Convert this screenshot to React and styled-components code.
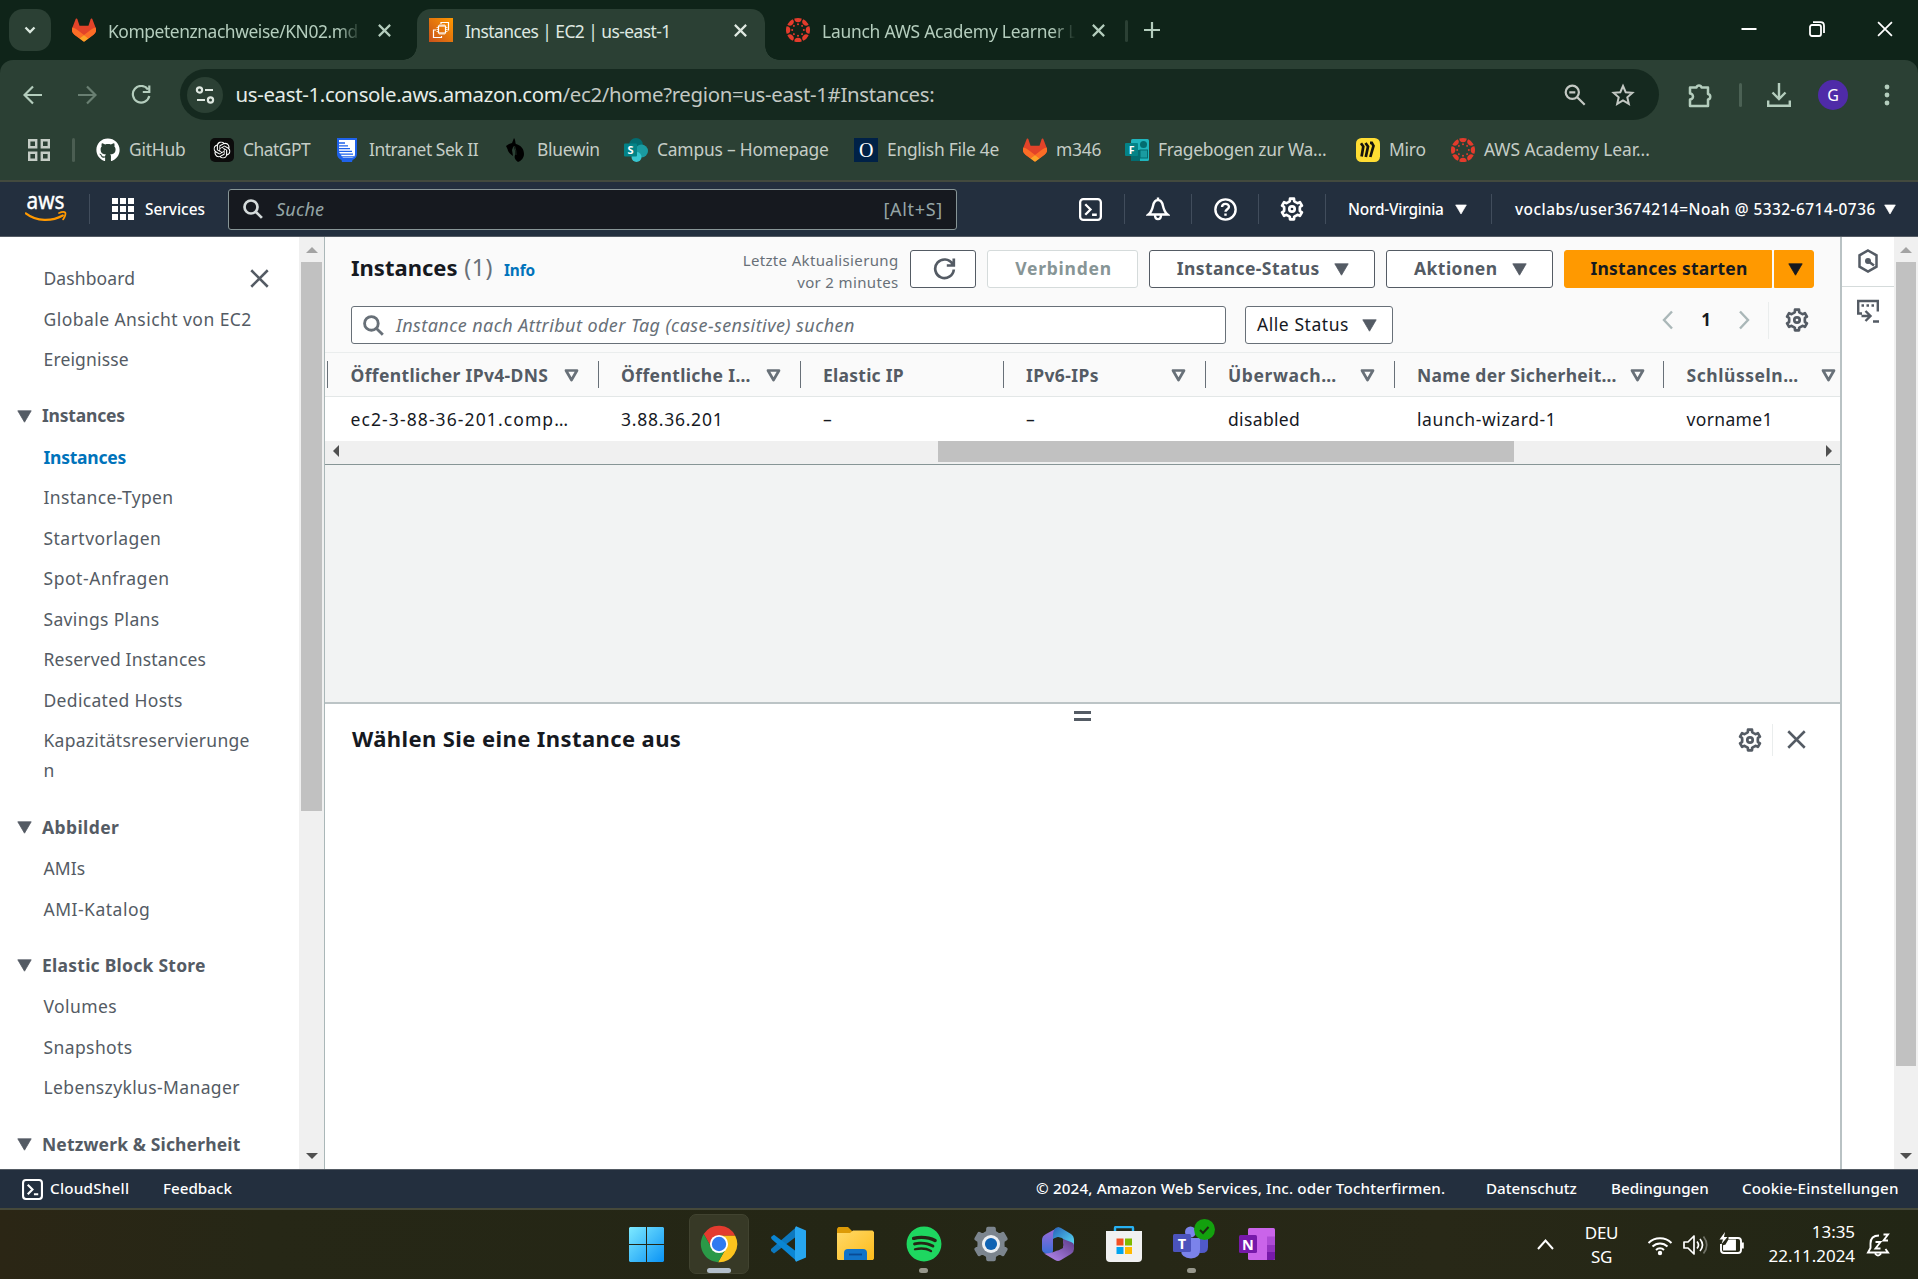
import React from "react";
import styled, { createGlobalStyle } from "styled-components";
import { FaGithub, FaSpotify } from "react-icons/fa";
import { SiOpenai } from "react-icons/si";

const c = {
  strip: "#0f2419",
  toolbar: "#2b4034",
  omni: "#15291f",
  mint: "#b4cdbd",
  chromeText: "#c5cdc6",
  navy: "#232f3e",
  grey: "#545b64",
  mid: "#687078",
  blue: "#0073bb",
  ink: "#16191f",
};

const Global = createGlobalStyle`
  *, *::before, *::after { box-sizing: border-box; }
  body { margin: 0; background: #fff; overflow: hidden; }
  svg { display: block; flex: none; }
  button { font: inherit; color: inherit; cursor: pointer; margin: 0; }
`;

const Screen = styled.div`
  width: 1918px;
  height: 1279px;
  overflow: hidden;
  display: flex;
  flex-direction: column;
  font-family: "Noto Sans", "Open Sans", sans-serif;
  font-size: 17.5px;
  color: ${c.ink};
`;

/* fixed-width slot inside a bar */
const Slot = styled.div`
  flex: none;
  width: ${(p) => p.$w}px;
  height: 100%;
  display: flex;
  align-items: center;
  justify-content: ${(p) => p.$align || "center"};
  white-space: nowrap;
`;

const VRule = styled.span`
  flex: none;
  width: ${(p) => p.$w || 1}px;
  height: ${(p) => p.$h || 30}px;
  margin: 0 ${(p) => p.$r || 0}px 0 ${(p) => p.$l || 0}px;
  background: ${(p) => p.$c || "#414d5c"};
  border-radius: ${(p) => (p.$round ? 2 : 0)}px;
`;

/* ---------- browser chrome ---------- */
const TabStrip = styled.header`
  height: 60px;
  flex: none;
  display: flex;
  background: ${c.strip};
  color: ${c.mint};
  font-size: 17.4px;
`;
const TabSearch = styled.button`
  width: 42px;
  height: 42px;
  margin: 9px 9px 0 9px;
  padding: 0;
  border: 0;
  border-radius: 14px;
  background: ${c.toolbar};
  color: #dbe8df;
  display: grid;
  place-items: center;
`;
const Tab = styled.div`
  position: relative;
  flex: none;
  width: ${(p) => p.$w}px;
  height: 51px;
  margin-top: 9px;
  padding: 0 ${(p) => p.$pr}px 9px ${(p) => p.$pl}px;
  display: flex;
  align-items: center;
  border-radius: 14px 14px 0 0;
  background: ${(p) => (p.$active ? c.toolbar : "transparent")};
  color: ${(p) => (p.$active ? "#dfe8e1" : c.mint)};
  ${(p) =>
    p.$active &&
    `&::before, &::after {
      content: ""; position: absolute; bottom: 0; width: 14px; height: 14px;
    }
    &::before { left: -14px; background: radial-gradient(circle at 0 0, transparent 13.5px, ${c.toolbar} 14px); }
    &::after { right: -14px; background: radial-gradient(circle at 100% 0, transparent 13.5px, ${c.toolbar} 14px); }`}
`;
const TabTitle = styled.span`
  width: 256px;
  margin-left: 12px;
  padding-top: 2px;
  white-space: nowrap;
  letter-spacing: ${(p) => p.$ls}px;
  line-height: 28px;
  ${(p) => p.$fade && "mask-image: linear-gradient(90deg, #000 90%, transparent 99%);"}
`;
const TabClose = styled.span`
  margin-left: auto;
`;
const TabRule = styled.span`
  flex: none;
  width: 3px;
  height: 22px;
  margin-top: 20px;
  border-radius: 2px;
  background: ${c.toolbar};
`;
const WindowControls = styled.div`
  margin-left: auto;
  display: flex;
  color: #fff;
  height: 58px;
`;
const ToolbarWrap = styled.div`
  height: 60px;
  flex: none;
  background: ${c.strip};
`;
const Toolbar = styled.div`
  height: 60px;
  padding-top: 9px;
  display: flex;
  background: ${c.toolbar};
  border-radius: 13px 13px 0 0;
  color: ${c.mint};
  & > * { height: 51px; }
`;
const Omnibox = styled.div`
  flex: none;
  width: 1479px;
  height: 51px;
  margin-left: 6px;
  padding: 0 12px 0 7px;
  display: flex;
  align-items: center;
  border-radius: 26px;
  background: ${c.omni};
  color: #c3c8c3;
`;
const SiteInfo = styled.span`
  width: 36px;
  height: 36px;
  border-radius: 50%;
  background: ${c.toolbar};
  display: grid;
  place-items: center;
  color: #dfe8e1;
`;
const Url = styled.span`
  margin-left: 12.5px;
  padding-bottom: 1px;
  flex: 1;
  font-size: 20.4px;
  letter-spacing: -0.33px;
  white-space: nowrap;
  b { font-weight: 400; color: #e6ece7; }
`;
const Avatar = styled.span`
  width: 30px;
  height: 30px;
  border-radius: 50%;
  background: #4f2ba8;
  color: #fff;
  font-size: 16px;
  line-height: 30px;
  text-align: center;
`;
const BookmarkBar = styled.nav`
  height: 62px;
  flex: none;
  padding-left: 28px;
  display: flex;
  align-items: center;
  background: ${c.toolbar};
  border-bottom: 2px solid #434a3e;
  color: ${c.chromeText};
  font-size: 17.4px;
`;
const Bookmark = styled.a`
  flex: none;
  width: ${(p) => p.$w}px;
  display: flex;
  align-items: center;
  gap: 9px;
  white-space: nowrap;
  letter-spacing: ${(p) => p.$ls || 0}px;
`;
const IconBox = styled.span`
  width: ${(p) => p.$w || 24}px;
`;
const BookmarkName = styled.span`
  padding-bottom: 2px;
`;

/* ---------- AWS header ---------- */
const AwsHeader = styled.header`
  height: 55px;
  flex: none;
  display: flex;
  align-items: center;
  background: ${c.navy};
  border-bottom: 1px solid #545b64;
  color: #fff;
  font-size: 15.4px;
  font-weight: 500;
  white-space: nowrap;
`;
const LogoPad = styled.span`
  padding-right: 22px;
`;
const AwsSearch = styled.div`
  flex: none;
  width: 729px;
  height: 41px;
  padding: 0 13px 0 14px;
  display: flex;
  align-items: center;
  background: ${c.ink};
  border: 1px solid #879596;
  border-radius: 3px;
  font-size: 18px;
  font-weight: 400;
  color: #95a5a6;
  letter-spacing: 0.25px;
  svg { color: #d5dbdb; }
  em { flex: 1; margin-left: 13px; }
  span { letter-spacing: 0.7px; }
`;
const Label = styled.span`
  margin-left: ${(p) => p.$l || 0}px;
  letter-spacing: ${(p) => p.$ls || 0}px;
  white-space: nowrap;
`;

/* ---------- page ---------- */
const Page = styled.div`
  height: 932px;
  flex: none;
  display: flex;
`;
const Sidebar = styled.aside`
  position: relative;
  width: 299px;
  padding: 26px 0 0 43.5px;
  overflow: hidden;
  color: ${c.grey};
`;
const CloseNav = styled.span`
  position: absolute;
  top: 32px;
  left: 250px;
`;
const NavItem = styled.div`
  line-height: 30px;
  margin-bottom: 10.5px;
  width: 212px;
  overflow-wrap: anywhere;
  letter-spacing: ${(p) => p.$ls || 0}px;
  font-weight: ${(p) => (p.$active ? 700 : 400)};
  color: ${(p) => (p.$active ? c.blue : c.grey)};
`;
const NavSection = styled.div`
  margin: 26.4px 0 11.4px -27px;
  display: flex;
  align-items: center;
  gap: 10.5px;
  line-height: 30px;
  font-weight: 700;
  letter-spacing: ${(p) => p.$ls || 0}px;
  svg { margin-top: 2px; }
`;
const VScroll = styled.div`
  flex: none;
  width: ${(p) => p.$w}px;
  display: flex;
  flex-direction: column;
  align-items: center;
  background: #f0f0f0;
  padding: 9px ${(p) => p.$pr}px 9px 2px;
`;
const Thumb = styled.div`
  width: 100%;
  height: ${(p) => p.$h}px;
  margin: 9px 0 auto;
  background: #c1c1c1;
`;
const Content = styled.main`
  width: 1518px;
  border-left: 1.5px solid #aab7b8;
  border-right: 2px solid #b9c2c4;
  display: flex;
  flex-direction: column;
  background: #f2f3f3;
`;
const TableTop = styled.section`
  height: 116px;
  background: #fafafa;
  border-bottom: 1px solid #eaeded;
  padding: 13px 26px 0 26px;
`;
const HeadRow = styled.div`
  display: flex;
  height: 38px;
`;
const Title = styled.h1`
  margin: 0;
  font-size: 22px;
  line-height: 34px;
  letter-spacing: ${(p) => p.$ls || 0}px;
  font-weight: 700;
  white-space: nowrap;
  small { font-size: 23px; font-weight: 400; color: ${c.mid}; letter-spacing: 0.6px; margin-left: 1px; }
`;
const Info = styled.a`
  margin: 6px 0 0 11px;
  font-size: 15.4px;
  line-height: 30px;
  font-weight: 700;
  letter-spacing: -0.1px;
  color: ${c.blue};
`;
const Updated = styled.div`
  width: 200px;
  margin: -1px 11.5px 0 auto;
  text-align: right;
  font-size: 15px;
  line-height: 22px;
  color: ${c.mid};
  letter-spacing: 0.35px;
`;
const Button = styled.button`
  flex: none;
  width: ${(p) => p.$w}px;
  height: 38px;
  margin-right: ${(p) => (p.$mr == null ? 11 : p.$mr)}px;
  padding: 0 0 2px 2px;
  display: flex;
  align-items: center;
  justify-content: center;
  gap: 14.5px;
  font-weight: 700;
  letter-spacing: ${(p) => p.$ls || 0}px;
  white-space: nowrap;
  border-radius: ${(p) => p.$radius || "3px"};
  border: 1.5px solid ${(p) => (p.$primary ? "#ff9900" : p.disabled ? "#d5dbdb" : c.grey)};
  background: ${(p) => (p.$primary ? "#ff9900" : "#fff")};
  color: ${(p) => (p.$primary ? c.ink : p.disabled ? "#879596" : c.grey)};
  svg { position: relative; top: 1px; }
`;
const FilterRow = styled.div`
  display: flex;
  margin-top: 18px;
  height: 38px;
`;
const FilterInput = styled.div`
  flex: none;
  width: 875px;
  height: 38px;
  padding-left: 11px;
  display: flex;
  align-items: center;
  gap: 12px;
  background: #fff;
  border: 1.5px solid ${c.mid};
  border-radius: 3px;
  color: ${c.mid};
  em { letter-spacing: 0.42px; font-size: 18px; }
`;
const Select = styled.div`
  width: 148px;
  margin-left: 19px;
  height: 38px;
  padding: 0 15px 2px 11px;
  display: flex;
  align-items: center;
  justify-content: space-between;
  background: #fff;
  border: 1.5px solid ${c.mid};
  border-radius: 3px;
  letter-spacing: 0.55px;
  svg { color: ${c.grey}; margin-top: 2px; }
`;
const Pager = styled.div`
  margin-left: auto;
  height: 28px;
  display: flex;
  align-items: center;
  color: #aab7b8;
  b { color: ${c.ink}; font-size: 17px; padding-bottom: 1px; }
`;
const GearGrey = styled.span`
  color: ${c.grey};
`;
const TableRow = styled.div`
  height: ${(p) => p.$h}px;
  flex: none;
  padding-left: 2px;
  overflow: hidden;
  display: grid;
  grid-template-columns: 270.5px 202px 203px 202px 189px 269.5px 191px;
  align-items: center;
  background: ${(p) => (p.$head ? "#fafafa" : "#fff")};
  border-bottom: ${(p) => (p.$head ? "1px solid #e3e7e7" : "0")};
`;
const Th = styled.div`
  height: 27px;
  padding: 0 18.5px 0 22.5px;
  border-left: 1.5px solid ${c.mid};
  display: flex;
  align-items: center;
  justify-content: space-between;
  white-space: nowrap;
  font-weight: 700;
  color: ${c.grey};
  letter-spacing: ${(p) => p.$ls || 0}px;
  svg { margin-top: 2px; }
`;
const Td = styled.div`
  padding-left: 23.5px;
  white-space: nowrap;
  letter-spacing: ${(p) => p.$ls || 0}px;
`;
const HScroll = styled.div`
  height: 24px;
  flex: none;
  padding: 0 7px;
  display: flex;
  align-items: flex-start;
  background: #f0f0f0;
  border-bottom: 1.5px solid #879596;
  svg { margin-top: 4px; }
`;
const HThumb = styled.div`
  width: 576px;
  height: 21px;
  margin-left: 598px;
  margin-right: auto;
  background: #c1c1c1;
`;
const SplitPanel = styled.section`
  margin-top: auto;
  height: 467px;
  border-top: 2px solid #bcc4c6;
  background: #fff;
  display: flex;
  flex-direction: column;
`;
const Handle = styled.div`
  width: 17px;
  height: 10px;
  margin: 7px auto 0 749px;
  border: solid ${c.grey};
  border-width: 3px 0;
`;
const SplitHead = styled.div`
  display: flex;
  align-items: center;
  height: 37px;
  padding: 0 34px 0 27px;
  color: ${c.grey};
  h1 { color: ${c.ink}; margin: 0 auto 3px 0; }
`;
const ToolRail = styled.aside`
  width: 52px;
  display: flex;
  flex-direction: column;
  color: ${c.grey};
`;
const RailItem = styled.div`
  height: 50px;
  padding-bottom: 2px;
  display: grid;
  place-items: center;
  border-bottom: ${(p) => (p.$line ? "1px solid #d5dbdb" : "0")};
`;

/* ---------- footer ---------- */
const Footer = styled.footer`
  height: 41px;
  flex: none;
  padding: 0 0 0 22px;
  display: flex;
  align-items: center;
  background: ${c.navy};
  border-top: 1px solid #545b64;
  border-bottom: 2px solid #46493a;
  color: #fff;
  font-size: 15.2px;
  font-weight: 500;
`;
const FootLink = styled.a`
  flex: none;
  white-space: nowrap;
  width: ${(p) => p.$w}px;
  margin-left: ${(p) => p.$l || 0}px;
  padding-bottom: 2px;
  letter-spacing: ${(p) => p.$ls || 0}px;
`;
const Taskbar = styled.div`
  flex: 1;
  padding-left: 610px;
  display: flex;
  background: linear-gradient(90deg, #2b2615 0, #262716 14%, #242615 45%, #282817 75%, #222615 100%);
  color: #fff;
`;
const TaskItem = styled.div`
  flex: none;
  width: ${(p) => p.$w}px;
  height: 69px;
  display: flex;
  flex-direction: column;
  align-items: center;
  padding-top: 4px;
`;
const Tile = styled.div`
  width: 60px;
  height: 60px;
  display: grid;
  place-items: center;
  border-radius: 7px;
  background: ${(p) => (p.$on ? "#373926" : "transparent")};
  border: 1px solid ${(p) => (p.$on ? "#414330" : "transparent")};
`;
const TeamsTile = styled.div`
  width: 60px;
  height: 60px;
  display: flex;
  align-items: flex-start;
  justify-content: flex-end;
  padding: 5px 3px 0 0;
`;
const Dot = styled.span`
  width: ${(p) => p.$w}px;
  height: 5px;
  margin-top: -6px;
  border-radius: 3px;
  background: ${(p) => p.$c};
`;
const TrayText = styled.div`
  flex: none;
  width: ${(p) => p.$w}px;
  text-align: ${(p) => p.$align || "center"};
  font-size: 17px;
  line-height: 24px;
  padding-top: ${(p) => p.$t}px;
  letter-spacing: ${(p) => p.$ls}px;
`;

/* ---------- drawings ---------- */
const Line = ({ s = 24, w = 2, vb = 24, d, children, ...rest }) => (
  <svg width={s} height={s} viewBox={`0 0 ${vb} ${vb}`} fill="none" stroke="currentColor" strokeWidth={w} {...rest}>
    {d && <path d={d} />}
    {children}
  </svg>
);
const Cross = ({ s = 12, w = 2 }) => <Line s={s} w={w} vb={12} d="M.8.8l10.4 10.4M11.2.8L.8 11.2" />;
const Caret = ({ w = 15, h = 13 }) => (
  <svg width={w} height={h} viewBox="0 0 15 13"><path d="M.8.8h13.4L7.5 12.2z" fill="currentColor" stroke="currentColor" strokeWidth=".8" strokeLinejoin="round" /></svg>
);
const SortCaret = () => (
  <svg width="15" height="13" viewBox="0 0 15 13"><path d="M2 1.5h11L7.5 11z" fill="none" stroke={c.mid} strokeWidth="2.7" strokeLinejoin="round" /></svg>
);
const ScrollTip = ({ dir, dim }) => {
  const upright = dir === "up" || dir === "down";
  return (
    <svg width={upright ? 12 : 8} height={upright ? 7 : 12} viewBox={upright ? "0 0 12 7" : "0 0 8 12"}>
      <path
        d={{ up: "M0 7L6 1l6 6z", down: "M0 0l6 6 6-6z", left: "M7 0L1 6l6 6z", right: "M1 0l6 6-6 6z" }[dir]}
        fill={dim ? "#a3a3a3" : "#505050"}
      />
    </svg>
  );
};
const gearPath = (() => {
  const pts = [];
  for (let k = 0; k < 6; k++) {
    [[-28, 5.2], [-15, 5.5], [-11, 7], [11, 7], [15, 5.5], [28, 5.2]].forEach(([a, r]) => {
      const t = ((60 * k - 90 + a) * Math.PI) / 180;
      pts.push(`${(8 + r * Math.cos(t)).toFixed(2)} ${(8 + r * Math.sin(t)).toFixed(2)}`);
    });
  }
  return `M${pts.join("L")}Z`;
})();
const Gear = ({ s = 22 }) => (
  <Line s={s} vb={16} w={1.8} d={gearPath} strokeLinejoin="round"><circle cx="8" cy="8" r="1.8" /></Line>
);
const ShellIcon = ({ s = 22 }) => (
  <Line s={s} vb={22} w={2.2}>
    <rect x="1.1" y="1.1" width="19.8" height="19.8" rx="3" />
    <path d="M6 6l5 5-5 5M12.5 16h4.5" />
  </Line>
);
const Magnifier = ({ s = 20, w = 2.7 }) => (
  <Line s={s} vb={20} w={w}><circle cx="8" cy="8" r="6.5" /><path d="M12.6 12.6l6.3 6.3" /></Line>
);
const Fox = () => (
  <svg width="24" height="24" viewBox="0 0 24 24">
    <path fill="#e24329" d="m23.6 9.593-.033-.086L20.3.98a.851.851 0 0 0-.336-.405.87.87 0 0 0-1 .054.87.87 0 0 0-.29.44l-2.204 6.748H7.53L5.326 1.07a.857.857 0 0 0-.29-.441.87.87 0 0 0-1-.054.859.859 0 0 0-.336.405L.433 9.502l-.032.086a6.066 6.066 0 0 0 2.012 7.01l.011.008.03.022 4.977 3.727 2.462 1.863 1.5 1.132a1.008 1.008 0 0 0 1.22 0l1.5-1.132 2.461-1.863 5.006-3.75.013-.01a6.068 6.068 0 0 0 2.007-7.003z" />
    <path fill="#fc6d26" d="M23.6 9.6a11 11 0 0 0-4.4 2L12 17l4.6 3.4 5-3.75a6 6 0 0 0 2-7.05zM.4 9.6a11 11 0 0 1 4.4 2L12 17l-4.6 3.4-5-3.75a6 6 0 0 1-2-7.05z" />
    <path fill="#fca326" d="M7.4 20.4l2.5 1.86 1.5 1.13a1 1 0 0 0 1.2 0l1.5-1.13 2.5-1.86L12 17z" />
  </svg>
);
const CanvasRing = () => (
  <svg width="24" height="24" viewBox="0 0 24 24">
    {[0, 45, 90, 135, 180, 225, 270, 315].map((a) => (
      <g key={a} transform={`rotate(${a} 12 12)`} fill="#e43b2c">
        <path d="M8.3.6a12 12 0 0 1 7.4 0A3.7 3.7 0 0 1 8.3.6z" />
        <circle cx="12" cy="6.2" r="1" />
      </g>
    ))}
  </svg>
);
const Ec2Icon = () => (
  <svg width="24" height="24" viewBox="0 0 24 24">
    <defs><linearGradient id="ec2" x1="0" y1="1" x2="1" y2="0"><stop offset="0" stopColor="#c8511b" /><stop offset="1" stopColor="#f90" /></linearGradient></defs>
    <rect width="24" height="24" fill="url(#ec2)" />
    <g fill="none" stroke="#fff" strokeWidth="1.2">
      <rect x="9.5" y="8" width="7" height="7" />
      <path d="M11 6v2M13 6v2M15 6v2M11 15v2M13 15v2M15 15v2M7.5 9.5h2M7.5 11.5h2M7.5 13.5h2M16.5 9.5h2M16.5 11.5h2M16.5 13.5h2" strokeWidth=".8" />
      <path d="M7 12H4.5v7.5h8V18M12 6V4.5h7.5V12H18.5" />
    </g>
  </svg>
);
const ShieldIcon = () => (
  <svg width="20" height="24" viewBox="0 0 20 24">
    <path d="M0 0h20v16c0 3-2 5-4.5 6L15 24H5l-.5-2C2 21 0 19 0 16z" fill="#1f62ea" />
    <path d="M2 2h16v14q0 3-3 4H6l-2-3-2-3z" fill="#fff" />
    <path d="M2 5h6M2 7.8h9M2 10.6h11M2 13.4h13M3 16.2h13M5 18.8h12" stroke="#1f62ea" strokeWidth="1.3" />
  </svg>
);
const BluewinIcon = () => (
  <svg width="20" height="24" viewBox="0 0 20 24">
    <path d="M8 0c2 3 1 5 2 6 4 1 8 4 8 10 0 4-3 7-6 8-3-2-4-4-3-7 .5-3 0-6-1.5-9L6 12l1 6C4 16 2 14 1.5 11L0 8l3-2 3-1z" fill="#000" />
    <path d="M8.500 8c1.500 4 1.500 6 1.500 9" stroke={c.toolbar} strokeWidth=".7" fill="none" />
  </svg>
);
const SharepointIcon = () => (
  <svg width="24" height="24" viewBox="0 0 24 24">
    <circle cx="12" cy="7" r="7" fill="#036c70" /><circle cx="17.5" cy="13" r="6.5" fill="#1a9ba1" /><circle cx="12.5" cy="19" r="5" fill="#37c6d0" />
    <rect y="5.5" width="13" height="13" rx="1" fill="#038387" />
    <text x="6.5" y="16" fontSize="11" fontWeight="700" fill="#fff" textAnchor="middle">S</text>
  </svg>
);
const OxfordIcon = () => (
  <svg width="24" height="24" viewBox="0 0 24 24">
    <rect width="24" height="24" fill="#002147" />
    <text x="12" y="19" fontSize="20" fontFamily="Liberation Serif, serif" fill="#fff" textAnchor="middle">O</text>
  </svg>
);
const FormsIcon = () => (
  <svg width="24" height="24" viewBox="0 0 24 24">
    <rect x="6" y="1" width="18" height="22" rx="1.5" fill="#1fb5bd" /><rect x="6" y="12" width="9" height="11" fill="#036c70" />
    <rect x="15" y="12" width="7.5" height="8" fill="#1a9ba1" stroke="#036c70" /><circle cx="18.5" cy="6.5" r="3.5" fill="#036c70" />
    <rect y="5" width="13" height="13" rx="1" fill="#038387" />
    <text x="6.5" y="15.5" fontSize="10.5" fontWeight="700" fill="#fff" textAnchor="middle">F</text>
  </svg>
);
const MiroIcon = () => (
  <svg width="24" height="24" viewBox="0 0 24 24">
    <rect width="24" height="24" rx="5.5" fill="#ffdd33" />
    <path d="M5 5.3l2.3 3.2L5.6 18.5M9.5 5l2.5 3.5L9.8 19M14 4.8h1.8l1.7 3L14.3 19" fill="none" stroke="#16130e" strokeWidth="2.7" />
  </svg>
);
const AwsLogo = () => (
  <svg width="42" height="52" viewBox="0 -10.5 42 52">
    <text x="20.5" y="15" fontSize="23.5" fontWeight="400" fill="#fff" stroke="#fff" strokeWidth=".4" textAnchor="middle" textLength="38" lengthAdjust="spacingAndGlyphs">aws</text>
    <path d="M.8 19.8c11 8.500 26 8.300 37 2.200" fill="none" stroke="#f90" strokeWidth="2.2" strokeLinecap="round" />
    <path d="M34 19.500c2.500-1 5.500-1.200 6.300-.3.600 1-.3 4.500-2.200 6.600" fill="none" stroke="#f90" strokeWidth="1.8" strokeLinecap="round" />
  </svg>
);
const WindowsIcon = () => (
  <svg width="35" height="35" viewBox="0 0 35 35">
    <defs><linearGradient id="win" gradientUnits="userSpaceOnUse" x1="0" y1="0" x2="35" y2="35"><stop offset="0" stopColor="#7eeaff" /><stop offset="1" stopColor="#0a93f5" /></linearGradient></defs>
    <path fill="url(#win)" d="M1 0h16v17H0V1zM18 0h16l1 1v16H18zM0 18h17v17H1l-1-1zM18 18h17v16l-1 1H18z" />
  </svg>
);
const ChromeIcon = () => (
  <svg width="38" height="38" viewBox="1 1 46 46">
    <path fill="#e33b2e" d="M24 14H43.6A22 22 0 0 0 5.54 12.03L15.34 29z" />
    <path fill="#fcc31e" d="M43.6 14A22 22 0 0 1 22.86 45.97L32.66 29L24 14z" />
    <path fill="#2a9947" d="M22.86 45.97A22 22 0 0 1 5.54 12.03L15.34 29L32.66 29z" />
    <circle cx="24" cy="24" r="11" fill="#fff" /><circle cx="24" cy="24" r="8.7" fill="#2f7af0" />
  </svg>
);
const CodeIcon = () => (
  <svg width="36" height="36" viewBox="0 0 36 36">
    <path fill="#0d78be" d="M1 25l3 2.5L27 10V.5L1 23z" />
    <path fill="#0a86d4" d="M1 11l3-2.3L27 26v9.5L1.5 13z" />
    <path fill="#27a6f0" d="M26 .3L36 4.5v27L26 35.8 25 34V2z" />
  </svg>
);
const FolderIcon = () => (
  <svg width="37" height="34" viewBox="0 0 37 34">
    <defs><linearGradient id="fold" x1="0" y1="0" x2="1" y2="1"><stop offset="0" stopColor="#ffd968" /><stop offset="1" stopColor="#fdbb1b" /></linearGradient></defs>
    <path fill="#dc9a06" d="M1.5 0h9.5l4 4v4H0V1.5z" />
    <path fill="url(#fold)" d="M0 6h13l3-2.5h19.5L37 5v26.5L36 33H1l-1-1z" />
    <path fill="#1273c8" d="M7 33v-7q0-4 4-4h15q4 0 4 4v7z" /><path d="M12 27.5h13" stroke="#0a4a94" strokeWidth="1.8" />
  </svg>
);
const SettingsIcon = () => (
  <svg width="36" height="36" viewBox="0 0 16 16">
    <path d={gearPath} fill="#7c858e" stroke="#7c858e" strokeWidth="1.6" strokeLinejoin="round" />
    <circle cx="8" cy="8" r="4" fill="#eceff2" /><circle cx="8" cy="8" r="2.7" fill="#0f63b3" />
  </svg>
);
const CopilotIcon = () => (
  <svg width="32" height="34" viewBox="0 0 32 34">
    <defs>
      <linearGradient id="ca" x1="0" y1="0" x2="0" y2="1"><stop offset="0" stopColor="#a06ad8" /><stop offset="1" stopColor="#2a6fd8" /></linearGradient>
      <linearGradient id="cb" x1="0" y1="0" x2="1" y2="1"><stop offset="0" stopColor="#2562b8" /><stop offset="1" stopColor="#5ce0f8" /></linearGradient>
      <linearGradient id="cc" x1="0" y1="1" x2="1" y2="0"><stop offset="0" stopColor="#b98cf4" /><stop offset="1" stopColor="#5b3a86" /></linearGradient>
    </defs>
    <path fill="url(#ca)" d="M16 .5L4 7Q0 9 0 13v9q0 3 3 4l9 5q-3-3-1-7V11q0-5 6-10.5z" />
    <path fill="url(#cb)" d="M14 .8q3-1 5 .2l10 6q3 2 3 6v7l-11-8-1-1q-5-2-9 1V8q0-5 3-7.2z" />
    <path fill="url(#cc)" d="M32 18v4q0 3-3 5l-10 6q-3 2-6 0L2 26.5q9 0 18-5.5 2-2 1-5v-4l8 3q3 1 3 3z" />
    <path fill="#262716" d="M11 12.5l5-2.5 5 2.5v8.5l-5 2.5-5-2.5z" />
  </svg>
);
const StoreIcon = () => (
  <svg width="36" height="36" viewBox="0 0 36 36">
    <path d="M9 6V2q0-1 1-1h16q1 0 1 1v4" fill="none" stroke="#27b1f2" strokeWidth="2.4" />
    <path d="M0 5h36v27q0 4-4 4H4q-4 0-4-4z" fill="#f1f1f1" />
    <path fill="#f25022" d="M10.5 12.5h7v7h-7z" /><path fill="#7fba00" d="M19 12.5h7v7h-7z" /><path fill="#00a4ef" d="M10.5 21h7v7h-7z" /><path fill="#ffb900" d="M19 21h7v7h-7z" />
  </svg>
);
const TeamsIcon = () => (
  <svg width="46" height="46" viewBox="0 0 46 46">
    <circle cx="29" cy="14" r="4.5" fill="#5059c9" /><path fill="#5059c9" d="M22 19h14v9q0 6-6 6h-4z" />
    <circle cx="18.5" cy="13" r="5.5" fill="#7b83eb" /><path fill="#7b83eb" d="M9 19h19v12q0 8-9 8.5-10-.5-10-8.5z" />
    <rect x="1" y="15" width="18" height="18" rx="1.5" fill="#4b53bc" />
    <text x="10" y="29.5" fontSize="14.5" fontWeight="700" fill="#fff" textAnchor="middle">T</text>
    <circle cx="32.5" cy="10.5" r="10.5" fill="#13a10e" /><path d="M28 11l3 3 5.5-6" fill="none" stroke="#1c2a12" strokeWidth="2" />
  </svg>
);
const OneNoteIcon = () => (
  <svg width="36" height="34" viewBox="0 0 36 34">
    <rect x="9" y="1" width="27" height="32" rx="1.5" fill="#ca64ea" /><path fill="#ae4bd5" d="M28 9.5h8V18h-8z" /><path fill="#9332bf" d="M28 18h8v7h-8z" /><path fill="#7719aa" d="M28 25h8v6.5L34.5 33H28z" />
    <rect y="8" width="18" height="18" rx="1.5" fill="#7719aa" />
    <text x="9" y="22.5" fontSize="14.5" fontWeight="700" fill="#fff" textAnchor="middle">N</text>
  </svg>
);

/* ---------- data ---------- */
const bookmarks = [
  [<FaGithub size={24} color="#fff" />, "GitHub", 114, -0.2],
  [<svg width="24" height="24" viewBox="0 0 24 24"><rect width="24" height="24" rx="5" fill="#0c0c0c" /><g transform="translate(3.5 3.5)"><SiOpenai size={17} color="#fff" /></g></svg>, "ChatGPT", 127, -0.5],
  [<ShieldIcon />, "Intranet Sek II", 169, -0.45, 23],
  [<BluewinIcon />, "Bluewin", 118, -0.3, 22],
  [<SharepointIcon />, "Campus – Homepage", 230, -0.2],
  [<OxfordIcon />, "English File 4e", 169, -0.25],
  [<Fox />, "m346", 102, -0.25],
  [<FormsIcon />, "Fragebogen zur Wa...", 231, -0.25],
  [<MiroIcon />, "Miro", 95, -0.2],
  [<CanvasRing />, "AWS Academy Lear...", 220, -0.07],
];
const nav = [
  ["Dashboard", "item", 0.1], ["Globale Ansicht von EC2", "item", 0.45], ["Ereignisse", "item", 0.15],
  ["Instances", "section", -0.2],
  ["Instances", "active", -0.25], ["Instance-Typen", "item", 0.35], ["Startvorlagen", "item", 0.47],
  ["Spot-Anfragen", "item", 0.55], ["Savings Plans", "item", 0.35],
  ["Reserved Instances", "item", 0.2], ["Dedicated Hosts", "item", 0.33], ["Kapazitätsreservierungen", "item", 0.28],
  ["Abbilder", "section", 0.4], ["AMIs", "item", 0.1], ["AMI-Katalog", "item", 0.5],
  ["Elastic Block Store", "section", 0.25], ["Volumes", "item", 0.4], ["Snapshots", "item", 0.4],
  ["Lebenszyklus-Manager", "item", 0.37],
  ["Netzwerk & Sicherheit", "section", 0.14],
];
const columns = [
  ["Öffentlicher IPv4-DNS", "ec2-3-88-36-201.comp…", true, 0.35, 1.1],
  ["Öffentliche I…", "3.88.36.201", true, 0.39, 0.75],
  ["Elastic IP", "–", false, 0.25, 0],
  ["IPv6-IPs", "–", true, 0.4, 0],
  ["Überwach…", "disabled", true, 0.6, 0.35],
  ["Name der Sicherheit…", "launch-wizard-1", true, 0.3, 0.6],
  ["Schlüsseln…", "vorname1", true, 0.55, 0.35],
];

function BrowserChrome() {
  return (
    <>
      <TabStrip>
        <TabSearch><Line s={12} vb={12} w={2.3} d="M1.5 3.5L6 8l4.5-4.5" /></TabSearch>
        <Tab $w={357} $pl={12} $pr={26}><Fox /><TabTitle $fade $ls={-0.42}>Kompetenznachweise/KN02.md</TabTitle><TabClose><Cross s={13} /></TabClose></Tab>
        <Tab $w={348} $pl={12} $pr={18} $active><Ec2Icon /><TabTitle $ls={-0.55}>Instances | EC2 | us-east-1</TabTitle><TabClose><Cross s={13} /></TabClose></Tab>
        <Tab $w={360} $pl={21} $pr={20}><CanvasRing /><TabTitle $fade $ls={-0.22}>Launch AWS Academy Learner L</TabTitle><TabClose><Cross s={13} /></TabClose></Tab>
        <TabRule />
        <Slot $w={48}><Line s={16} vb={16} w={2.2} d="M8 0v16M0 8h16" /></Slot>
        <WindowControls>
          <Slot $w={68}><Line s={16} vb={16} d="M.5 8h15" /></Slot>
          <Slot $w={68}><Line s={16} vb={16} w={1.8}><rect x="1" y="4" width="11" height="11" rx="2" /><path d="M4 1.2h7.5q3.5 0 3.500 3.500V12" /></Line></Slot>
          <Slot $w={67}><Cross s={16} w={1.3} /></Slot>
        </WindowControls>
      </TabStrip>
      <ToolbarWrap>
        <Toolbar>
          <Slot $w={66}><Line s={20} vb={20} w={2.2} d="M19 10H2M10 1.5L1.5 10l8.5 8.5" /></Slot>
          <Slot $w={42}><Line s={20} vb={20} w={2.2} d="M1 10h17M10 1.5l8.5 8.5-8.5 8.5" opacity=".45" /></Slot>
          <Slot $w={66}><Line s={20} vb={20} w={2.2} d="M17 4.5A8.3 8.3 0 1 0 18.3 11M18.3 .5v6.5h-6.5" /></Slot>
          <Omnibox>
            <SiteInfo><Line s={20} vb={20} w={2.2}><circle cx="4.5" cy="5" r="2.6" /><path d="M10 5h8M2 15h8" /><circle cx="15.5" cy="15" r="2.6" /></Line></SiteInfo>
            <Url><b>us-east-1.console.aws.amazon.com</b>/ec2/home?region=us-east-1#Instances:</Url>
            <Slot $w={49}><Line s={22} vb={22} w={2.2}><circle cx="8.3" cy="8.3" r="6.6" /><path d="M13.2 13.2l7.5 7.5M5.3 8.3h6" /></Line></Slot>
            <Slot $w={48}><Line s={24} vb={24} d="M12 3l2.7 6.2 6.7.6-5.1 4.5 1.5 6.6L12 17.4l-5.8 3.5 1.5-6.6-5.1-4.5 6.7-.6z" /></Slot>
          </Omnibox>
          <Slot $w={81}><Line s={28} vb={28} w={2.5} strokeLinejoin="round"><path d="M4 6.5h6.5a2.6 2.6 0 0 1 5 0H22V13a2.8 2.8 0 0 1 0 5.500v6.500H4v-6.500a3 3 0 0 0 0-6z" /></Line></Slot>
          <Slot $w={0}><VRule $w={3} $h={24} $c="#4b6154" $round /></Slot>
          <Slot $w={78}><Line s={24} vb={24} w={2.4} d="M12 0v15M5.5 9.5L12 16l6.5-6.500M1.200 17.500v5.300h21.600v-5.300" /></Slot>
          <Slot $w={30}><Avatar>G</Avatar></Slot>
          <Slot $w={77}><svg width="6" height="22" viewBox="0 0 6 22" fill={c.mint}><circle cx="3" cy="3" r="2.4" /><circle cx="3" cy="11" r="2.4" /><circle cx="3" cy="19" r="2.4" /></svg></Slot>
        </Toolbar>
      </ToolbarWrap>
      <BookmarkBar>
        <Line s={22} vb={22} w={2.4}><path d="M1.2 1.2h7v7h-7zM13.8 1.2h7v7h-7zM1.2 13.8h7v7h-7zM13.8 13.8h7v7h-7z" /></Line>
        <VRule $l={22} $r={21} $w={3} $h={24} $c="#4b5e52" $round />
        {bookmarks.map(([icon, name, w, ls, iw]) => (
          <Bookmark key={name} $w={w} $ls={ls}><IconBox $w={iw}>{icon}</IconBox><BookmarkName>{name}</BookmarkName></Bookmark>
        ))}
      </BookmarkBar>
    </>
  );
}

function ConsoleHeader() {
  return (
    <AwsHeader>
      <Slot $w={89} $align="flex-end"><LogoPad><AwsLogo /></LogoPad></Slot>
      <VRule $r={22} />
      <svg width="22" height="22" viewBox="0 0 22 22" fill="#fff"><path d="M0 0h6v6H0zM8 0h6v6H8zM16 0h6v6h-6zM0 8h6v6H0zM8 8h6v6H8zM16 8h6v6h-6zM0 16h6v6H0zM8 16h6v6H8zM16 16h6v6h-6z" /></svg>
      <Slot $w={94} $align="flex-start"><Label $l={11}>Services</Label></Slot>
      <AwsSearch><Magnifier /><em>Suche</em><span>[Alt+S]</span></AwsSearch>
      <Slot $w={100} />
      <Slot $w={67}><ShellIcon s={23} /></Slot>
      <VRule />
      <Slot $w={66}><Line s={24} vb={24} w={2.4} d="M12 2.5V.5M2.500 17.500h19c-2.500-2-3.500-4-4.500-8.500C16.200 5 15 3 12 3S7.800 5 7 9c-1 4.500-2 6.500-4.500 8.500zM9 18c0 5.500 6 5.500 6 0" /></Slot>
      <VRule />
      <Slot $w={66}><Line s={23} vb={22} w={2.3}><circle cx="11" cy="11" r="9.7" /><path d="M7.7 8.7c0-4.200 6.600-4 6.600-.3 0 2.300-3.300 2.300-3.300 4.800M11 14.800v2.200" /></Line></Slot>
      <VRule />
      <Slot $w={66}><Gear s={24} /></Slot>
      <VRule $r={22} />
      <Slot $w={107} $align="flex-start"><Label $ls={-0.2}>Nord-Virginia</Label></Slot>
      <Caret w={12} h={11} />
      <VRule $l={24} $r={23} />
      <Slot $w={369} $align="flex-start"><Label $ls={0.48}>voclabs/user3674214=Noah @ 5332-6714-0736</Label></Slot>
      <Caret w={12} h={11} />
    </AwsHeader>
  );
}

function Instances() {
  return (
    <Content>
      <TableTop>
        <HeadRow>
          <Title>Instances <small>(1)</small></Title>
          <Info>Info</Info>
          <Updated>Letzte Aktualisierung<br />vor 2 minutes</Updated>
          <Button $w={66}><Line s={23} vb={23} w={2.7} d="M19.5 6A9.3 9.3 0 1 0 20.8 11.5M20.8 .5v7h-7" /></Button>
          <Button $w={151} $ls={0.75} disabled>Verbinden</Button>
          <Button $w={226} $ls={0.4}>Instance-Status <Caret /></Button>
          <Button $w={167} $ls={0.45}>Aktionen <Caret /></Button>
          <Button $w={208} $ls={0.22} $primary $mr={2} $radius="3px 0 0 3px">Instances starten</Button>
          <Button $w={40} $primary $mr={0} $radius="0 3px 3px 0"><Caret /></Button>
        </HeadRow>
        <FilterRow>
          <FilterInput><Magnifier s={21} /><em>Instance nach Attribut oder Tag (case-sensitive) suchen</em></FilterInput>
          <Select><span>Alle Status</span><Caret /></Select>
          <Pager>
            <Slot $w={38}><Line s={20} vb={20} w={2.4} d="M14 1.5L6 10l8 8.5" /></Slot>
            <Slot $w={38}><b>1</b></Slot>
            <Slot $w={38}><Line s={20} vb={20} w={2.4} d="M6 1.5l8 8.5-8 8.5" /></Slot>
            <VRule $l={5} $r={16} $h={37} $c="#eaeded" />
            <GearGrey><Gear s={24} /></GearGrey>
            <Slot $w={5} />
          </Pager>
        </FilterRow>
      </TableTop>
      <TableRow $head $h={44}>
        {columns.map(([h, , sort, ls]) => <Th key={h} $ls={ls}>{h}{sort && <SortCaret />}</Th>)}
      </TableRow>
      <TableRow $h={44}>
        {columns.map(([h, v, , , ls]) => <Td key={h} $ls={ls}>{v}</Td>)}
      </TableRow>
      <HScroll><ScrollTip dir="left" /><HThumb /><ScrollTip dir="right" /></HScroll>
      <SplitPanel>
        <Handle />
        <SplitHead>
          <Title $ls={0.4}>Wählen Sie eine Instance aus</Title>
          <Gear s={24} />
          <VRule $l={10} $r={14} $h={32} $c="#eaeded" />
          <Cross s={19} w={1.6} />
        </SplitHead>
      </SplitPanel>
    </Content>
  );
}

export default function App() {
  return (
    <Screen>
      <Global />
      <BrowserChrome />
      <ConsoleHeader />
      <Page>
        <Sidebar>
          <CloseNav><Cross s={19} w={1.6} /></CloseNav>
          {nav.map(([name, kind, ls], i) =>
            kind === "section"
              ? <NavSection key={i} $ls={ls}><Caret />{name}</NavSection>
              : <NavItem key={i} $ls={ls} $active={kind === "active"}>{name}</NavItem>
          )}
        </Sidebar>
        <VScroll $w={25} $pr={2}><ScrollTip dir="up" dim /><Thumb $h={549} /><ScrollTip dir="down" /></VScroll>
        <Instances />
        <ToolRail>
          <RailItem $line><Line s={24} vb={24} w={2.5}><path d="M12 1.5l8.5 4.800v11.400L12 22.500l-8.500-4.800V6.300z" /><circle cx="12" cy="12" r="3" fill="currentColor" stroke="none" /><path d="M12 12l6 4.500" /></Line></RailItem>
          <RailItem><Line s={24} vb={24} w={2.4} d="M6 14.5H2.200V2h19.600v10.500M5.500 6.500h2.500M10.500 6.500h2.500M15.500 6.500h2.500M5.500 17h8M9.500 12l5 5-5 5M17 22.500h6" /></RailItem>
        </ToolRail>
        <VScroll $w={24} $pr={2}><ScrollTip dir="up" dim /><Thumb $h={804} /><ScrollTip dir="down" /></VScroll>
      </Page>
      <Footer>
        <ShellIcon s={21} />
        <FootLink $l={7} $w={113} $ls={0.25}>CloudShell</FootLink>
        <FootLink $w={873}>Feedback</FootLink>
        <FootLink $w={450} $ls={0.15}>© 2024, Amazon Web Services, Inc. oder Tochterfirmen.</FootLink>
        <FootLink $w={125}>Datenschutz</FootLink>
        <FootLink $w={131}>Bedingungen</FootLink>
        <FootLink $w={160} $ls={0.17}>Cookie-Einstellungen</FootLink>
      </Footer>
      <Taskbar>
        <TaskItem $w={72}><Tile><WindowsIcon /></Tile></TaskItem>
        <TaskItem $w={73}><Tile $on><ChromeIcon /></Tile><Dot $w={24} $c="#b3bfcb" /></TaskItem>
        <TaskItem $w={66}><Tile><CodeIcon /></Tile></TaskItem>
        <TaskItem $w={69}><Tile><FolderIcon /></Tile></TaskItem>
        <TaskItem $w={67}><Tile><FaSpotify size={36} color="#1ed760" /></Tile><Dot $w={9} $c="#97988c" /></TaskItem>
        <TaskItem $w={68}><Tile><SettingsIcon /></Tile></TaskItem>
        <TaskItem $w={66}><Tile><CopilotIcon /></Tile></TaskItem>
        <TaskItem $w={66}><Tile><StoreIcon /></Tile></TaskItem>
        <TaskItem $w={68}><TeamsTile><TeamsIcon /></TeamsTile><Dot $w={9} $c="#97988c" /></TaskItem>
        <TaskItem $w={64}><Tile><OneNoteIcon /></Tile></TaskItem>
        <Slot $w={241} />
        <Slot $w={30}><Line s={17} vb={17} d="M1 13l7.5-8.5L16 13" /></Slot>
        <TrayText $w={83} $t={11} $ls={-0.3}>DEU<br />SG</TrayText>
        <Slot $w={34}><Line s={26} vb={26} w={1.9}><path d="M1.5 11a16.3 16.3 0 0 1 23 0M5.500 14.500a10.700 10.700 0 0 1 15 0M9 18a5.600 5.600 0 0 1 8 0" /><circle cx="13" cy="21" r="2.2" fill="currentColor" stroke="none" /></Line></Slot>
        <Slot $w={36}><Line s={26} vb={26} w={1.7}><path d="M2 10h4l6-6v18l-6-6H2z" strokeLinejoin="round" /><path d="M15 9.5q3 3.500 0 7M18 7q5 6 0 12" /><path d="M21.5 4.5q6.500 8.500 0 17" opacity=".35" /></Line></Slot>
        <Slot $w={38}><Line s={26} vb={26} w={1.9}><path d="M9.5 6H19q3 0 3 3v9q0 3-3 3H5q-3 0-3-3v-6" /><path d="M23.5 10.5v6" strokeWidth="2.6" /><path d="M10 8.5h6v9H5v-3.500l2-.5z" fill="currentColor" /><path d="M6 0L.5 7.500h3.500L2.500 12 8.500 5H5z" fill="currentColor" stroke="none" /></Line></Slot>
        <TrayText $w={104} $t={10} $align="right" $ls={-0.05}>13:35<br />22.11.2024</TrayText>
        <Slot $w={46}><Line s={26} vb={26} w={1.9}><path d="M14 3.5Q5.500 3.500 5.500 11.500V16L3 20.500h20L20.500 17M10 21.500q3 4 6 0M10.500 10h5l-5 6.500h5M18.500 2.500h4.500l-4.500 6H23" /></Line></Slot>
      </Taskbar>
    </Screen>
  );
}
